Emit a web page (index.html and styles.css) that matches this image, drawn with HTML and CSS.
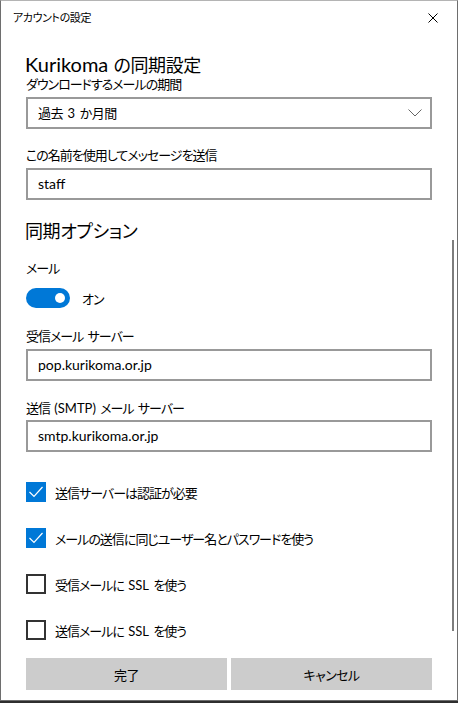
FILE: index.html
```html
<!DOCTYPE html>
<html lang="ja">
<head>
    <meta charset="UTF-8">
    <meta name="viewport" content="width=device-width, initial-scale=1.0">
    <title>アカウントの設定</title>
    <link rel="stylesheet" href="styles.css">
</head>
<body>
    <div class="window">
        <div class="titlebar">
            <span class="title">アカウントの設定</span>
            <svg class="close" width="10" height="10" viewBox="0 0 10 10">
                <path d="M0.5 0.5 L9.5 9.5 M9.5 0.5 L0.5 9.5" stroke="#000" stroke-width="1" fill="none"/>
            </svg>
        </div>

        <div class="content">
            <h1 class="heading"><span class="latin-big">Kurikoma</span> の同期設定</h1>
            <div class="field-label">ダウンロードするメールの期間</div>
            <div class="select">
                <span>過去 <span class="latin">3</span> か月間</span>
                <svg class="chevron" width="14" height="8" viewBox="0 0 14 8">
                    <path d="M0.5 0.5 L7 7 L13.5 0.5" stroke="#666" stroke-width="1" fill="none"/>
                </svg>
            </div>

            <div class="field-label label-gap">この名前を使用してメッセージを送信</div>
            <div class="textbox">staff</div>

            <h2 class="heading section-title">同期オプション</h2>
            <div class="field-label mail-label">メール</div>
            <div class="toggle-row">
                <span class="toggle"><span class="knob"></span></span>
                <span>オン</span>
            </div>

            <div class="field-label server-label">受信メール サーバー</div>
            <div class="textbox">pop.kurikoma.or.jp</div>

            <div class="field-label smtp-label">送信 <span class="latin">(SMTP)</span> メール サーバー</div>
            <div class="textbox smtp-box">smtp.kurikoma.or.jp</div>

            <div class="checks">
                <div class="check-row">
                    <span class="checkbox checked">
                        <svg width="20" height="20" viewBox="0 0 20 20">
                            <path d="M3.5 10 L8 14.5 L16.5 5" stroke="#fff" stroke-width="1.2" fill="none"/>
                        </svg>
                    </span>
                    <span>送信サーバーは認証が必要</span>
                </div>
                <div class="check-row">
                    <span class="checkbox checked">
                        <svg width="20" height="20" viewBox="0 0 20 20">
                            <path d="M3.5 10 L8 14.5 L16.5 5" stroke="#fff" stroke-width="1.2" fill="none"/>
                        </svg>
                    </span>
                    <span>メールの送信に同じユーザー名とパスワードを使う</span>
                </div>
                <div class="check-row">
                    <span class="checkbox"></span>
                    <span>受信メールに <span class="latin">SSL</span> を使う</span>
                </div>
                <div class="check-row">
                    <span class="checkbox"></span>
                    <span>送信メールに <span class="latin">SSL</span> を使う</span>
                </div>
            </div>

            <div class="buttons">
                <button type="button">完了</button>
                <button type="button">キャンセル</button>
            </div>
        </div>

        <div class="scroll-thumb"></div>
    </div>
</body>
</html>
```

FILE: styles.css
```css
* {
    box-sizing: border-box;
}

body {
    margin: 0;
    background: #2e2e2e;
    font-family: Lato, "Noto Sans CJK JP", sans-serif;
    font-feature-settings: "palt";
    color: #000;
}

.window {
    position: relative;
    width: 458px;
    height: 701px;
    background: #ffffff;
    border: 1px solid #6e6e6e;
    border-top-color: #b4b4b4;
}

.titlebar {
    height: 33px;
    display: flex;
    justify-content: space-between;
    align-items: center;
    padding: 0 19px 0 12px;
}

.title {
    font-size: 11px;
    line-height: 33px;
    letter-spacing: -0.4px;
}

.content {
    padding: 0 25px 0 24px;
}

.heading {
    height: 22px;
    margin: 19px 0 0;
    font-size: 18px;
    font-weight: normal;
    line-height: 22px;
    letter-spacing: -0.4px;
    word-spacing: 1px;
}

.latin-big {
    font-size: 20px;
    letter-spacing: 0;
}

.latin {
    letter-spacing: 0;
}

.section-title {
    margin-top: 20px;
}

.field-label {
    height: 18px;
    font-size: 13px;
    line-height: 18px;
    letter-spacing: -1px;
    word-spacing: 2px;
    padding-left: 1px;
}

.label-gap {
    margin-top: 17px;
}

.mail-label {
    margin-top: 17px;
}

.server-label {
    margin-top: 19px;
}

.smtp-label {
    margin-top: 18px;
}

.select,
.textbox {
    height: 32px;
    margin-top: 4px;
    margin-left: 1px;
    border: 2px solid #999999;
    padding: 0 10px;
    font-size: 14px;
    line-height: 28px;
    display: flex;
    justify-content: space-between;
    align-items: center;
}

.select > span {
    font-size: 13px;
    letter-spacing: -0.6px;
    word-spacing: 2px;
}

.smtp-box {
    margin-top: 3px;
}

.chevron {
    margin-right: -2px;
}

.toggle-row {
    margin-top: 11px;
    margin-left: 1px;
    display: flex;
    align-items: center;
    gap: 12px;
    font-size: 13px;
    letter-spacing: -1px;
    height: 20px;
}

.toggle {
    width: 44px;
    height: 20px;
    border-radius: 10px;
    background: #0078d7;
    display: flex;
    justify-content: flex-end;
    align-items: center;
    padding-right: 5px;
}

.knob {
    width: 10px;
    height: 10px;
    border-radius: 50%;
    background: #ffffff;
}

.checks {
    margin-top: 30px;
    display: flex;
    flex-direction: column;
    gap: 26px;
}

.check-row {
    display: flex;
    align-items: center;
    gap: 9px;
    height: 20px;
    margin-left: 1px;
    font-size: 13px;
    letter-spacing: -1px;
    word-spacing: 2px;
}

.checkbox {
    width: 20px;
    height: 20px;
    border: 2px solid #333333;
    flex-shrink: 0;
}

.checkbox.checked {
    border: none;
    background: #0078d7;
}

.checkbox svg {
    display: block;
}

.buttons {
    margin-top: 18px;
    margin-left: 1px;
    display: flex;
    gap: 4px;
}

.buttons button {
    flex: 1;
    height: 32px;
    border: none;
    background: #cccccc;
    font-family: inherit;
    font-feature-settings: "palt";
    font-size: 13px;
    letter-spacing: -0.6px;
    color: #000;
}

/* overlay scrollbar of the settings pane */
.scroll-thumb {
    position: absolute;
    left: 451px;
    top: 239px;
    width: 2px;
    height: 391px;
    background: #7d7d7d;
}
```
